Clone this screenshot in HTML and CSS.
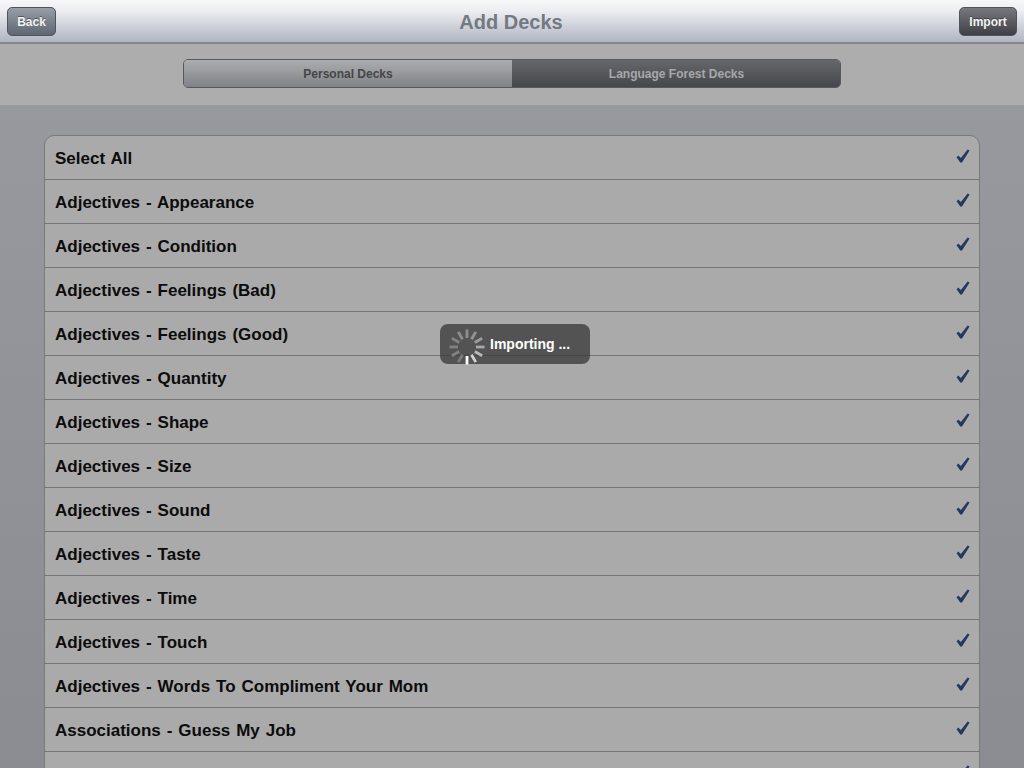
FILE: index.html
```html
<!DOCTYPE html>
<html lang="en">
<head>
  <meta charset="UTF-8">
  <title>Add Decks</title>
  <link rel="stylesheet" href="styles.css">
</head>
<body>
  <svg class="defs" width="0" height="0">
    <symbol id="check" viewBox="0 0 14 14">
      <path d="M0.6 8.2 L2.2 6.6 L4.9 9 L11.6 0.4 L13.6 1.5 L6 13.4 L4.2 13.4 Z"/>
    </symbol>
  </svg>

  <!-- Top navigation bar -->
  <header class="navbar">
    <div class="nav-left"><button class="nav-btn back-btn">Back</button></div>
    <h1>Add Decks</h1>
    <div class="nav-right"><button class="nav-btn import-btn">Import</button></div>
  </header>

  <!-- Deck source switch -->
  <div class="toolbar">
    <div class="segments">
      <div class="segment">Personal Decks</div>
      <div class="segment active">Language Forest Decks</div>
    </div>
  </div>

  <div class="content">
    <ul class="deck-list">
      <li>Select All <svg class="check"><use href="#check"/></svg></li>
      <li>Adjectives - Appearance <svg class="check"><use href="#check"/></svg></li>
      <li>Adjectives - Condition <svg class="check"><use href="#check"/></svg></li>
      <li>Adjectives - Feelings (Bad) <svg class="check"><use href="#check"/></svg></li>
      <li>Adjectives - Feelings (Good) <svg class="check"><use href="#check"/></svg></li>
      <li>Adjectives - Quantity <svg class="check"><use href="#check"/></svg></li>
      <li>Adjectives - Shape <svg class="check"><use href="#check"/></svg></li>
      <li>Adjectives - Size <svg class="check"><use href="#check"/></svg></li>
      <li>Adjectives - Sound <svg class="check"><use href="#check"/></svg></li>
      <li>Adjectives - Taste <svg class="check"><use href="#check"/></svg></li>
      <li>Adjectives - Time <svg class="check"><use href="#check"/></svg></li>
      <li>Adjectives - Touch <svg class="check"><use href="#check"/></svg></li>
      <li>Adjectives - Words To Compliment Your Mom <svg class="check"><use href="#check"/></svg></li>
      <li>Associations - Guess My Job <svg class="check"><use href="#check"/></svg></li>
      <li>Associations - Guess The City <svg class="check"><use href="#check"/></svg></li>
    </ul>
  </div>

  <!-- Progress toast, sits over the list -->
  <div class="toast">
    <svg class="spinner" width="40" height="40" viewBox="-20 -20 40 40">
      <line class="s1" x1="0" y1="-9" x2="0" y2="-17.5" transform="rotate(0)"/>
      <line class="s2" x1="0" y1="-9" x2="0" y2="-17.5" transform="rotate(30)"/>
      <line class="s3" x1="0" y1="-9" x2="0" y2="-17.5" transform="rotate(60)"/>
      <line class="s4" x1="0" y1="-9" x2="0" y2="-17.5" transform="rotate(90)"/>
      <line class="s5" x1="0" y1="-9" x2="0" y2="-17.5" transform="rotate(120)"/>
      <line class="s6" x1="0" y1="-9" x2="0" y2="-17.5" transform="rotate(150)"/>
      <line class="s7" x1="0" y1="-9" x2="0" y2="-17.5" transform="rotate(180)"/>
      <line class="s8" x1="0" y1="-9" x2="0" y2="-17.5" transform="rotate(210)"/>
      <line class="s9" x1="0" y1="-9" x2="0" y2="-17.5" transform="rotate(240)"/>
      <line class="s9" x1="0" y1="-9" x2="0" y2="-17.5" transform="rotate(270)"/>
      <line class="s9" x1="0" y1="-9" x2="0" y2="-17.5" transform="rotate(300)"/>
      <line class="s1" x1="0" y1="-9" x2="0" y2="-17.5" transform="rotate(330)"/>
    </svg>
    <span>Importing ...</span>
  </div>
</body>
</html>
```

FILE: styles.css
```css
/* Page frame */
html, body {
  height: 768px;
  overflow: hidden;
}
body {
  margin: 0;
  font-family: "Liberation Sans", Arial, sans-serif;
  background: linear-gradient(#9a9ba0, #8b8c92);
  position: relative;
}
.defs {
  position: absolute;
}

/* Navigation bar */
.navbar {
  height: 44px;
  box-sizing: border-box;
  padding: 7px 7px 0;
  display: grid;
  grid-template-columns: 1fr auto 1fr;
  background: linear-gradient(#f7f8fa 0, #eceef1 25%, #b1b5c3 100%);
  border-bottom: 2px solid #85868e;
}
.navbar h1 {
  margin: 0;
  padding-right: 2px;
  font-size: 20px;
  line-height: 30px;
  font-weight: bold;
  color: #737983;
}
.nav-right {
  text-align: right;
}
.nav-btn {
  height: 29px;
  padding: 0;
  border: 1px solid #4f535b;
  border-radius: 5px;
  font-family: inherit;
  font-size: 12px;
  font-weight: bold;
  color: #f4f4f4;
  text-shadow: 0 -1px 0 rgba(0, 0, 0, 0.4);
}
.back-btn {
  width: 49px;
  background: linear-gradient(#989da6, #5f6672);
}
.import-btn {
  width: 58px;
  background: linear-gradient(#77797e, #3e4045);
}

/* Segmented control */
.toolbar {
  height: 61px;
  background: #adadad;
  display: flex;
  justify-content: center;
  padding-top: 15px;
  box-sizing: border-box;
}
.segments {
  width: 658px;
  height: 29px;
  box-sizing: border-box;
  display: flex;
  border: 1px solid #58595d;
  border-radius: 5px;
  overflow: hidden;
}
.segment {
  flex: 0 0 328px;
  text-align: center;
  font-size: 12px;
  font-weight: bold;
  line-height: 29px;
  color: #44454a;
  background: linear-gradient(#acadaf, #818287);
}
.segment.active {
  flex: 1;
  padding-left: 1px;
  color: #a6a8aa;
  background: linear-gradient(#65676b, #45474c);
}

/* Deck list */
.content {
  padding: 30px 44px 0;
}
.deck-list {
  margin: 0;
  padding: 0;
  list-style: none;
  background: #aaaaaa;
  border: 1px solid #7a7a7c;
  border-radius: 10px 10px 0 0;
}
.deck-list li {
  height: 44px;
  box-sizing: border-box;
  padding: 2px 9px 0 10px;
  display: flex;
  justify-content: space-between;
  align-items: center;
  font-size: 17px;
  font-weight: bold;
  word-spacing: 1.2px;
  color: #0c0c0c;
  border-bottom: 1px solid #767678;
}
.check {
  width: 14px;
  height: 14px;
  margin-top: -6px;
  fill: #25385f;
}

/* Importing toast */
.toast {
  position: absolute;
  left: 440px;
  top: 324px;
  width: 150px;
  height: 40px;
  border-radius: 8px;
  background: rgba(50, 50, 50, 0.72);
  display: flex;
  align-items: center;
  color: #fff;
  font-size: 14px;
  font-weight: bold;
}
.toast span {
  margin-left: 3px;
}
.spinner {
  margin-left: 7px;
  margin-top: 5px;
  stroke-width: 2.8;
}
.s1 { stroke: #8e8e8e; }
.s2 { stroke: #949494; }
.s3 { stroke: #9c9c9c; }
.s4 { stroke: #a8a8a8; }
.s5 { stroke: #b8b8b8; }
.s6 { stroke: #d2d2d2; }
.s7 { stroke: #ffffff; }
.s8 { stroke: #7c7c7c; }
.s9 { stroke: #828282; }
```
